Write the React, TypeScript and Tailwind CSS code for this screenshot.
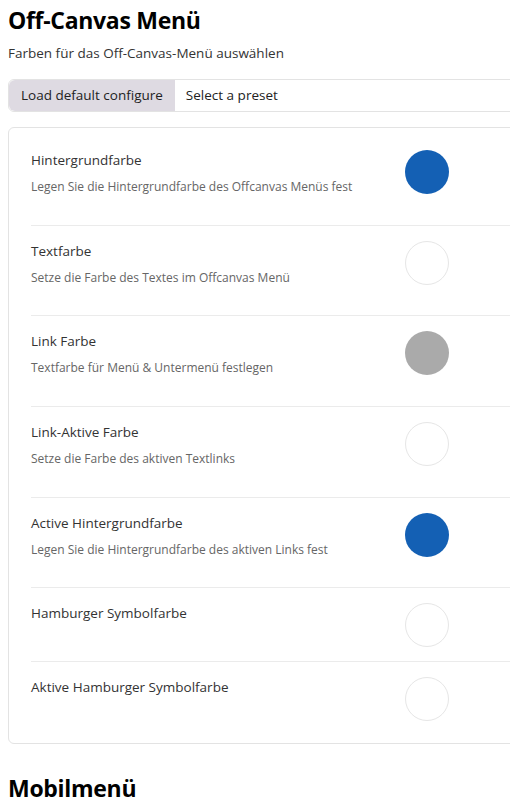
const rows = [
  { title: "Hintergrundfarbe", desc: "Legen Sie die Hintergrundfarbe des Offcanvas Menüs fest", color: "bg-[#1460b4]" },
  { title: "Textfarbe", desc: "Setze die Farbe des Textes im Offcanvas Menü", color: "bg-white border border-[#e6e6e6]" },
  { title: "Link Farbe", desc: "Textfarbe für Menü & Untermenü festlegen", color: "bg-[#aaaaaa]" },
  { title: "Link-Aktive Farbe", desc: "Setze die Farbe des aktiven Textlinks", color: "bg-white border border-[#e6e6e6]" },
  { title: "Active Hintergrundfarbe", desc: "Legen Sie die Hintergrundfarbe des aktiven Links fest", color: "bg-[#1460b4]" },
  { title: "Hamburger Symbolfarbe", desc: "", color: "bg-white border border-[#e6e6e6]" },
  { title: "Aktive Hamburger Symbolfarbe", desc: "", color: "bg-white border border-[#e6e6e6]" },
];

export default function App() {
  return (
    <div className="w-full overflow-hidden bg-white font-['Open_Sans',sans-serif] text-[#222]">
      <div className="w-[580px] px-2 pt-1">
        {/* Off-Canvas header */}
        <h2 className="text-[23px] font-bold leading-[32px] tracking-[-0.3px] text-black">Off-Canvas Menü</h2>
        <p className="mt-[8px] text-[13.5px] leading-[18px] text-[#333]">Farben für das Off-Canvas-Menü auswählen</p>

        {/* Preset bar */}
        <div className="mt-[17px] flex h-[33px] rounded-md border border-[#e3e3e3] text-[13.5px] text-[#222]">
          <button className="rounded-l-md bg-[#dedae2] px-3 text-left">Load default configure</button>
          <div className="flex items-center px-[11px]">Select a preset</div>
        </div>

        {/* Colors card */}
        <div className="mt-[15px] rounded-md border border-[#e3e3e3] px-[22px] py-[7px]">
          {rows.map((r, i) => (
            <div
              key={r.title}
              className={
                "grid grid-cols-[374px_1fr] items-start pt-[15px] " +
                (r.desc ? "h-[90.7px] " : "h-[74px] ") +
                (i < rows.length - 1 ? "border-b border-[#ebebeb]" : "")
              }
            >
              <div>
                <div className="text-[13.5px] leading-[20px] text-[#333]">{r.title}</div>
                {r.desc && (
                  <div className="mt-[9px] text-[12px] leading-[16px] text-[#666]">{r.desc}</div>
                )}
              </div>
              <div className={"h-[44px] w-[44px] rounded-full " + r.color} />
            </div>
          ))}
        </div>

        <h2 className="mt-[28px] text-[23px] font-bold leading-[32px] tracking-[-0.3px] text-black">Mobilmenü</h2>
      </div>
    </div>
  );
}
